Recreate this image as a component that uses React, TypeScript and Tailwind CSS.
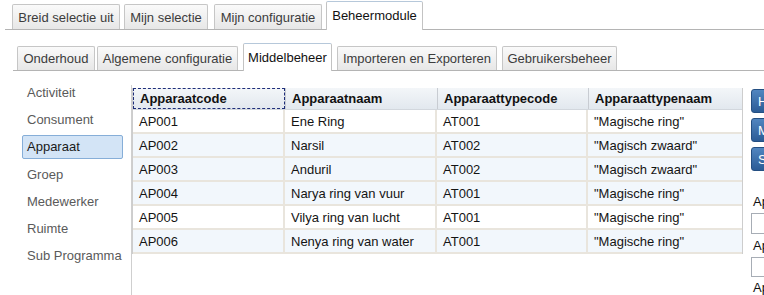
const topTabs = [
  { label: 'Breid selectie uit', w: 'w-[108px]', ml: 'ml-[7px]' },
  { label: 'Mijn selectie', w: 'w-[84px]', ml: 'ml-[4px]' },
  { label: 'Mijn configuratie', w: 'w-[108px]', ml: 'ml-[6px]' },
  { label: 'Beheermodule', w: 'w-[97px]', ml: 'ml-[4px]', active: true },
]

const subTabs = [
  { label: 'Onderhoud', w: 'w-[78px]', ml: 'ml-[4px]' },
  { label: 'Algemene configuratie', w: 'w-[141px]', ml: 'ml-[2px]' },
  { label: 'Middelbeheer', w: 'w-[89px]', ml: 'ml-[5px]', active: true },
  { label: 'Importeren en Exporteren', w: 'w-[160px]', ml: 'ml-[5px]' },
  { label: 'Gebruikersbeheer', w: 'w-[115px]', ml: 'ml-[5px]' },
]

const menu = ['Activiteit', 'Consument', 'Apparaat', 'Groep', 'Medewerker', 'Ruimte', 'Sub Programma']

const rows = [
  ['AP001', 'Ene Ring', 'AT001', '"Magische ring"'],
  ['AP002', 'Narsil', 'AT002', '"Magisch zwaard"'],
  ['AP003', 'Anduril', 'AT002', '"Magisch zwaard"'],
  ['AP004', 'Narya ring van vuur', 'AT001', '"Magische ring"'],
  ['AP005', 'Vilya ring van lucht', 'AT001', '"Magische ring"'],
  ['AP006', 'Nenya ring van water', 'AT001', '"Magische ring"'],
]

const cols = ['w-[152px]', 'w-[152px]', 'w-[151px]', 'w-[154px]']
const headers = ['Apparaatcode', 'Apparaatnaam', 'Apparaattypecode', 'Apparaattypenaam']

function Tab({ label, w, ml, active, h, activeH }: { label: string; w: string; ml: string; active?: boolean; h: string; activeH: string }) {
  if (active) {
    return (
      <div className={`${w} ${ml} ${activeH} -mb-px flex items-center justify-center bg-white border border-b-0 border-[#c3c3c3] border-t-[#b6c8da] rounded-t-[2px] text-[#111] relative z-10`}>
        {label}
      </div>
    )
  }
  return (
    <div className={`${w} ${ml} ${h} flex items-center justify-center bg-gradient-to-b from-[#fafafa] to-[#e7e7e7] border border-b-0 border-[#c6c6c6] rounded-t-[2px] text-[#3c3c3c]`}>
      {label}
    </div>
  )
}

export default function App() {
  return (
    <div className="w-[764px] h-[295px] overflow-hidden bg-white text-[13px] leading-[15px]" style={{ fontFamily: '"Liberation Sans", Arial, sans-serif' }}>
      <div className="h-[30px] ml-[5px] flex items-end border-b border-[#b4b4b4]">
        {topTabs.map((t) => (
          <Tab key={t.label} {...t} h="h-[25px]" activeH="h-[29px] pb-[1px]" />
        ))}
      </div>

      <div className="h-[41px] ml-[13px] flex items-end border-b border-[#b4b4b4]">
        {subTabs.map((t) => (
          <Tab key={t.label} {...t} h="h-[24px]" activeH="h-[28px] pb-[1px]" />
        ))}
      </div>

      <div className="flex h-[224px]">
        <div className="w-[131px] shrink-0 pt-[8px]">
          {menu.map((m) => (
            <div key={m} className="h-[27.2px] flex items-center">
              {m === 'Apparaat' ? (
                <div className="ml-[22px] w-[101px] h-[24px] flex items-center pl-[4px] bg-[#d3e4f6] border border-[#86aed8] rounded-[2px] text-[#1a1a1a]">
                  {m}
                </div>
              ) : (
                <span className="ml-[27px] text-[#5a5a5a]">{m}</span>
              )}
            </div>
          ))}
        </div>

        <div className="mt-[14px] flex-1 flex border-l border-[#cfcfcf] min-w-0">
          <div className="pt-[3px] shrink-0">
            <div className="w-[611px] border-l border-r border-[#cdcdcd]">
              <div className="flex h-[22px] bg-gradient-to-b from-[#f3f6f9] to-[#e2e8ee] border-b border-[#d2d7dd] font-bold text-[#111]">
                {headers.map((hd, i) => (
                  <div
                    key={hd}
                    className={`${cols[i]} flex items-center pl-[6px] ${
                      i === 0 ? 'border border-dashed border-[#1e2e7a]' : 'border-l border-[#c8ccd2]'
                    }`}
                  >
                    {hd}
                  </div>
                ))}
              </div>
              {rows.map((r, ri) => (
                <div
                  key={r[0]}
                  className={`flex h-[24px] border-b-2 border-[#e9e5dd] ${ri === 0 || ri === 4 ? 'bg-white' : 'bg-[#f2f7fc]'}`}
                >
                  {r.map((c, ci) => (
                    <div key={ci} className={`${cols[ci]} flex items-center pl-[6px] text-[#141414] ${ci < 3 ? 'border-r-2 border-[#e9e5dd]' : ''}`}>
                      {c}
                    </div>
                  ))}
                </div>
              ))}
            </div>
          </div>

          <div className="ml-[8px] pt-[4px] w-[40px] shrink-0 flex flex-col">
            {['H', 'M', 'S'].map((b, i) => (
              <div
                key={b}
                className={`${i > 0 ? 'mt-[5px]' : ''} h-[26px] flex items-center pl-[6px] text-white bg-gradient-to-b from-[#5186c0] to-[#2b5c96] border border-[#244f82] rounded-[3px]`}
              >
                {b}
              </div>
            ))}
            <div className="mt-[23px] h-[15px] pl-[2px] text-[#111]">Apparaatcode</div>
            <div className="mt-[4px] h-[22px] border border-[#a7adb5] bg-white"></div>
            <div className="mt-[4px] h-[15px] pl-[2px] text-[#111]">Apparaatnaam</div>
            <div className="mt-[4px] h-[22px] border border-[#a7adb5] bg-white"></div>
            <div className="mt-[3px] h-[15px] pl-[2px] text-[#111]">Apparaattypecode</div>
          </div>
        </div>
      </div>
    </div>
  )
}
